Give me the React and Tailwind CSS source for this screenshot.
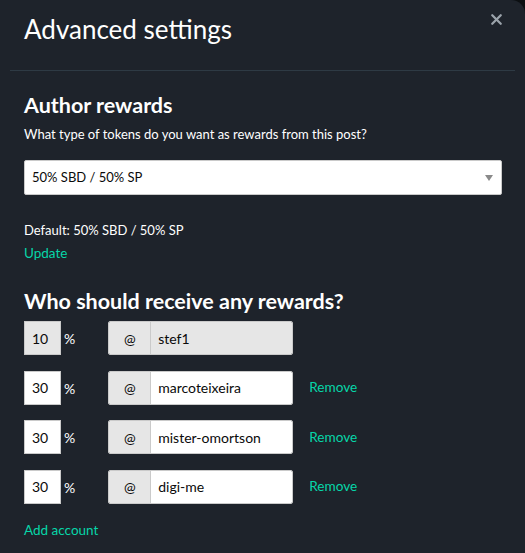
import { X } from 'lucide-react'

const rows = [
  { pct: '10', name: 'stef1', locked: true },
  { pct: '30', name: 'marcoteixeira' },
  { pct: '30', name: 'mister-omortson' },
  { pct: '30', name: 'digi-me' },
]

const BeneficiaryRow = ({ pct, name, locked }) => (
  <div className="flex items-center h-[34px]">
    <input
      readOnly
      value={pct}
      className={`w-[37px] h-[34px] border border-[#cacaca] px-[7px] text-[14px] text-[#0a0a0a] outline-none ${
        locked ? 'bg-[#e6e6e6]' : 'bg-white'
      }`}
    />
    <span className="ml-[3px] self-start mt-[7px] text-[14px] text-white">%</span>
    <div className="ml-[33px] flex h-[34px] w-[185px] border border-[#cacaca] rounded-[2px] overflow-hidden">
      <span className="w-[42px] flex items-center justify-center bg-[#e6e6e6] border-r border-[#cacaca] text-[14px] text-[#0a0a0a]">
        @
      </span>
      <input
        readOnly
        value={name}
        className={`flex-1 min-w-0 px-[7px] text-[14px] text-[#0a0a0a] outline-none ${
          locked ? 'bg-[#e6e6e6]' : 'bg-white'
        }`}
      />
    </div>
    {!locked && (
      <button className="ml-[16px] text-[13.6px] text-[#06d6a9]">Remove</button>
    )}
  </div>
)

export default function App() {
  return (
    <div className="w-[525px] h-[553px] bg-[#0c0f12] overflow-hidden" style={{ fontFamily: 'Lato, "Noto Sans", sans-serif' }}>
      <div className="relative w-[525px] h-[553px] bg-[#1e232b] rounded-tr-[14px] text-white">
        <button className="absolute right-[20px] top-[11px] text-[#9ba3ab]">
          <X size={17} strokeWidth={3.2} />
        </button>

        {/* Header */}
        <div className="h-[70px] px-[24px] pt-[11px]">
          <h2 className="text-[26px] leading-[36px] font-normal">Advanced settings</h2>
        </div>
        <div className="mx-[10px] h-px bg-[#2e3a44]" />

        <div className="px-[24px]">
          {/* Author rewards */}
          <h3 className="mt-[20px] text-[21.5px] leading-[28px] font-bold">Author rewards</h3>
          <p className="mt-[6px] text-[13px] leading-[18px]">
            What type of tokens do you want as rewards from this post?
          </p>
          <div className="relative mt-[17px] w-[478px] h-[35px] bg-white border border-[#cacaca] rounded-[2px] flex items-center px-[7px]">
            <span className="text-[13px] text-[#0a0a0a]">50% SBD / 50% SP</span>
            <span className="absolute right-[8px] top-[14px] w-0 h-0 border-l-[4px] border-r-[4px] border-t-[6px] border-l-transparent border-r-transparent border-t-[#8a8a8a]" />
          </div>

          <p className="mt-[26px] text-[13px] leading-[18px]">Default: 50% SBD / 50% SP</p>
          <button className="mt-[5px] text-[13.5px] leading-[18px] text-[#06d6a9]">Update</button>

          {/* Beneficiaries */}
          <h3 className="mt-[23px] text-[21.5px] leading-[28px] font-bold">Who should receive any rewards?</h3>
          <div className="mt-[6px] flex flex-col gap-[15.5px]">
            {rows.map((r) => (
              <BeneficiaryRow key={r.name} {...r} />
            ))}
          </div>
          <button className="mt-[16px] text-[13.5px] leading-[20px] text-[#06d6a9]">Add account</button>
        </div>
      </div>
    </div>
  )
}
